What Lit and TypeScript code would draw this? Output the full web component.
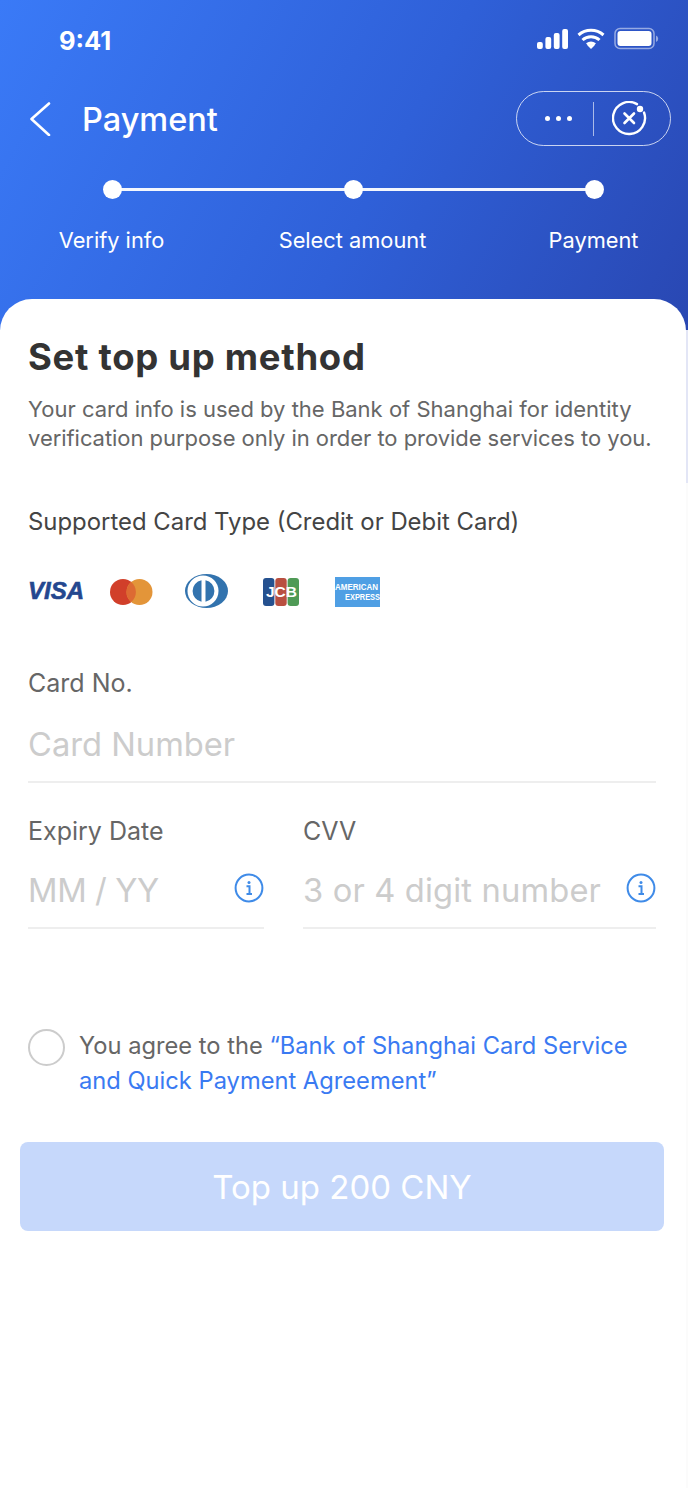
// Top up payment screen: header with stepper, then the card form.
import { LitElement, html, css, svg } from "lit";
import { customElement } from "lit/decorators.js";

const infoIcon = html`<svg class="info" width="30" height="30" viewBox="0 0 30 30" fill="none">
  <circle cx="15" cy="15" r="13.4" stroke="#3f8be8" stroke-width="2"></circle>
  <circle cx="15" cy="9.5" r="1.5" fill="#3f8be8"></circle>
  <path d="M12.5 13.2h3v7.6M12.5 21h5.5" stroke="#3f8be8" stroke-width="2"></path>
</svg>`;

const cardLogos = svg`
  <text x="0" y="29" font-family="Liberation Sans, sans-serif" font-size="24" font-weight="700" font-style="italic" fill="#24478f" stroke="#24478f" stroke-width="0.6" textLength="56" lengthAdjust="spacingAndGlyphs">VISA</text>
  <circle cx="95" cy="22" r="13" fill="#d13f2a"></circle>
  <circle cx="111.5" cy="22" r="13" fill="#e39539"></circle>
  <path d="M103.2 12a13 13 0 0 1 0 20a13 13 0 0 1 0-20z" fill="#dd6a33"></path>
  <ellipse cx="178.5" cy="21" rx="21.5" ry="17" fill="#3273ae"></ellipse>
  <circle cx="175" cy="21" r="15.5" fill="#fff"></circle>
  <path d="M173.5 10.2v21.6a11 11 0 0 1 0-21.6zM177.5 10.2a11 11 0 0 1 0 21.6z" fill="#3273ae"></path>
  <rect x="235" y="8" width="11.4" height="28" rx="3" fill="#25518f"></rect>
  <rect x="247.3" y="8" width="11.4" height="28" rx="3" fill="#b94f40"></rect>
  <rect x="259.6" y="8" width="11.4" height="28" rx="3" fill="#4f9a56"></rect>
  <text x="238" y="27" font-family="Liberation Sans, sans-serif" font-size="15" font-weight="700" fill="#fff" textLength="31" lengthAdjust="spacingAndGlyphs">JCB</text>
  <rect x="307" y="7" width="45" height="30" fill="#4f9fe4"></rect>
  <text x="307" y="20" font-family="Liberation Sans, sans-serif" font-size="9" font-weight="700" fill="#fff" textLength="43" lengthAdjust="spacingAndGlyphs">AMERICAN</text>
  <text x="317" y="30" font-family="Liberation Sans, sans-serif" font-size="9" font-weight="700" fill="#fff" textLength="35" lengthAdjust="spacingAndGlyphs">EXPRESS</text>
`;

@customElement("app-root")
export class AppRoot extends LitElement {
  static styles = css`
    :host {
      display: block;
      width: 688px;
      height: 1488px;
      overflow: hidden;
      background: linear-gradient(#e3e6f6 0 483px, #fbfbfb 483px);
      font-family: Inter, "Liberation Sans", sans-serif;
    }
    .head {
      height: 330px;
      color: #fff;
      background: linear-gradient(118deg, #3a7af7 0%, #2f60d8 55%, #2947b2 100%);
    }
    .status {
      height: 82px;
      box-sizing: border-box;
      padding: 27px 29px 0 59px;
      display: flex;
      justify-content: space-between;
      align-items: flex-start;
    }
    .time {
      font-size: 25.5px;
      line-height: 28px;
      font-weight: 700;
    }
    .nav {
      height: 90px;
      box-sizing: border-box;
      padding: 9px 17px 0 29px;
      display: flex;
      align-items: flex-start;
    }
    .nav h1 {
      margin: 2px 0 0 31px;
      font-size: 32.5px;
      line-height: 54px;
      font-weight: 500;
      flex: 1;
    }
    .back {
      margin-top: 11px;
    }
    .capsule {
      width: 155px;
      height: 55px;
      box-sizing: border-box;
      border: 1.5px solid rgba(255, 255, 255, 0.75);
      border-radius: 28px;
      display: flex;
      align-items: center;
    }
    .dots {
      width: 76px;
      display: flex;
      justify-content: flex-end;
      gap: 6px;
      padding-right: 21px;
      box-sizing: border-box;
    }
    .dots i {
      width: 5px;
      height: 5px;
      border-radius: 50%;
      background: #fff;
    }
    .divider {
      width: 1px;
      height: 34px;
      background: rgba(255, 255, 255, 0.6);
      margin-right: 18px;
    }
    .steps {
      display: grid;
      grid-template-columns: repeat(3, 241px);
      margin-left: -8px;
      width: 723px;
      margin-top: 8px;
    }
    .step {
      position: relative;
      display: flex;
      flex-direction: column;
      align-items: center;
      gap: 28px;
      font-size: 21.8px;
      line-height: 26px;
    }
    .step span {
      margin-left: -2px;
    }
    .dot {
      width: 19px;
      height: 19px;
      border-radius: 50%;
      background: #fff;
    }
    .step:not(:last-child)::after {
      content: "";
      position: absolute;
      top: 8px;
      left: 50%;
      width: 241px;
      height: 3px;
      background: rgba(255, 255, 255, 0.95);
    }
    .card {
      position: relative;
      box-sizing: border-box;
      min-height: 1189px;
      margin: -31px 2px 0 0;
      background: #fff;
      border-radius: 32px 32px 0 0;
      padding: 36px 30px 0 28px;
      color: #333;
    }
    h2 {
      margin: 0;
      font-size: 36.5px;
      letter-spacing: 0.7px;
      line-height: 44px;
      font-weight: 700;
      color: #333;
    }
    .lede {
      margin: 16px 0 0;
      font-size: 22px;
      line-height: 29px;
      color: #666;
      white-space: nowrap;
    }
    .lede span {
      letter-spacing: -0.05px;
    }
    .supported {
      margin-top: 54px;
      font-size: 23.9px;
      line-height: 30px;
      color: #444;
    }
    .logos {
      display: block;
      margin-top: 33px;
    }
    .field-label {
      font-size: 25px;
      line-height: 30px;
      color: #666;
    }
    .no {
      margin-top: 56px;
    }
    .input {
      display: flex;
      align-items: center;
      justify-content: space-between;
      height: 85px;
      box-sizing: border-box;
      border-bottom: 2px solid #eee;
      padding-top: 8px;
      font-size: 32.7px;
      color: #ccc;
    }
    .pair {
      display: grid;
      grid-template-columns: 236px 353px;
      column-gap: 39px;
      margin-top: 33px;
    }
    .pair .input {
      height: 83px;
      padding-top: 7px;
    }
    .info {
      margin-bottom: 4px;
    }
    .date {
      letter-spacing: -0.4px;
    }
    .cvv {
      letter-spacing: 0.15px;
    }
    .agree {
      display: flex;
      gap: 14px;
      margin-top: 99px;
      font-size: 23.7px;
      line-height: 35px;
      color: #666;
    }
    .radio {
      flex: none;
      width: 37px;
      height: 37px;
      box-sizing: border-box;
      border: 2px solid #ccc;
      border-radius: 50%;
      margin-top: 1px;
    }
    .agree span {
      color: #3a7af2;
    }
    .submit {
      margin: 44px -8px 0 -8px;
      height: 89px;
      border-radius: 8px;
      background: #c6d8fb;
      color: #fff;
      font-size: 33px;
      display: flex;
      align-items: center;
      justify-content: center;
    }
  `;

  render() {
    return html`
      <div class="head">
        <div class="status">
          <div class="time">9:41</div>
          <svg width="122" height="24" viewBox="0 0 122 24">
            <rect x="0" y="15" width="5.8" height="7" rx="2" fill="#fff"></rect>
            <rect x="8.4" y="10" width="5.8" height="12" rx="2" fill="#fff"></rect>
            <rect x="16.8" y="6" width="5.8" height="16" rx="2" fill="#fff"></rect>
            <rect x="25.2" y="2" width="5.8" height="20" rx="2" fill="#fff"></rect>
            <path d="M41.5 8a19 19 0 0 1 25 0M45.5 13a12.5 12.5 0 0 1 17 0M50 17.5a6.5 6.5 0 0 1 8 0" fill="none" stroke="#fff" stroke-width="3"></path>
            <path d="M50.5 18.5L54 22l3.5-3.5a5 5 0 0 0-7 0z" fill="#fff"></path>
            <rect x="78" y="1.5" width="39" height="20" rx="5" fill="none" stroke="#fff" stroke-opacity="0.5" stroke-width="1.5"></rect>
            <rect x="80.5" y="4" width="34" height="15" rx="3" fill="#fff"></rect>
            <path d="M119 8.5a3.5 3.5 0 0 1 0 6.5z" fill="#fff" fill-opacity="0.5"></path>
          </svg>
        </div>
        <div class="nav">
          <svg class="back" width="22" height="34" viewBox="0 0 22 34" fill="none">
            <path d="M20 1.5L2.5 17L20 33" stroke="#fff" stroke-width="2.6" stroke-linecap="round" stroke-linejoin="round"></path>
          </svg>
          <h1>Payment</h1>
          <div class="capsule">
            <div class="dots"><i></i><i></i><i></i></div>
            <div class="divider"></div>
            <svg width="36" height="36" viewBox="0 0 36 36" fill="none">
              <path d="M25 3.14A16 16 0 1 0 32.04 11.53" stroke="#fff" stroke-width="2.4" stroke-linecap="round"></path>
              <circle cx="28" cy="8" r="3.2" fill="#fff"></circle>
              <path d="M12.5 12.5l9.5 9.5M22 12.5l-9.5 9.5" stroke="#fff" stroke-width="2.6" stroke-linecap="round"></path>
            </svg>
          </div>
        </div>
        <div class="steps">
          <div class="step"><div class="dot"></div><span>Verify info</span></div>
          <div class="step"><div class="dot"></div><span>Select amount</span></div>
          <div class="step"><div class="dot"></div><span>Payment</span></div>
        </div>
      </div>
      <div class="card">
        <h2>Set top up method</h2>
        <p class="lede">
          Your card info is used by the Bank of Shanghai for identity<br />
          <span>verification purpose only in order to provide services to you.</span>
        </p>
        <div class="supported">Supported Card Type (Credit or Debit Card)</div>
        <svg class="logos" width="360" height="42" viewBox="0 0 360 42">${cardLogos}</svg>
        <div class="field-label no">Card No.</div>
        <div class="input">Card Number</div>
        <div class="pair">
          <div>
            <div class="field-label">Expiry Date</div>
            <div class="input"><span class="date">MM / YY</span>${infoIcon}</div>
          </div>
          <div>
            <div class="field-label">CVV</div>
            <div class="input"><span class="cvv">3 or 4 digit number</span>${infoIcon}</div>
          </div>
        </div>
        <div class="agree">
          <div class="radio"></div>
          <div>You agree to the <span>“Bank of Shanghai Card Service and Quick Payment Agreement”</span></div>
        </div>
        <div class="submit">Top up 200 CNY</div>
      </div>
    `;
  }
}
